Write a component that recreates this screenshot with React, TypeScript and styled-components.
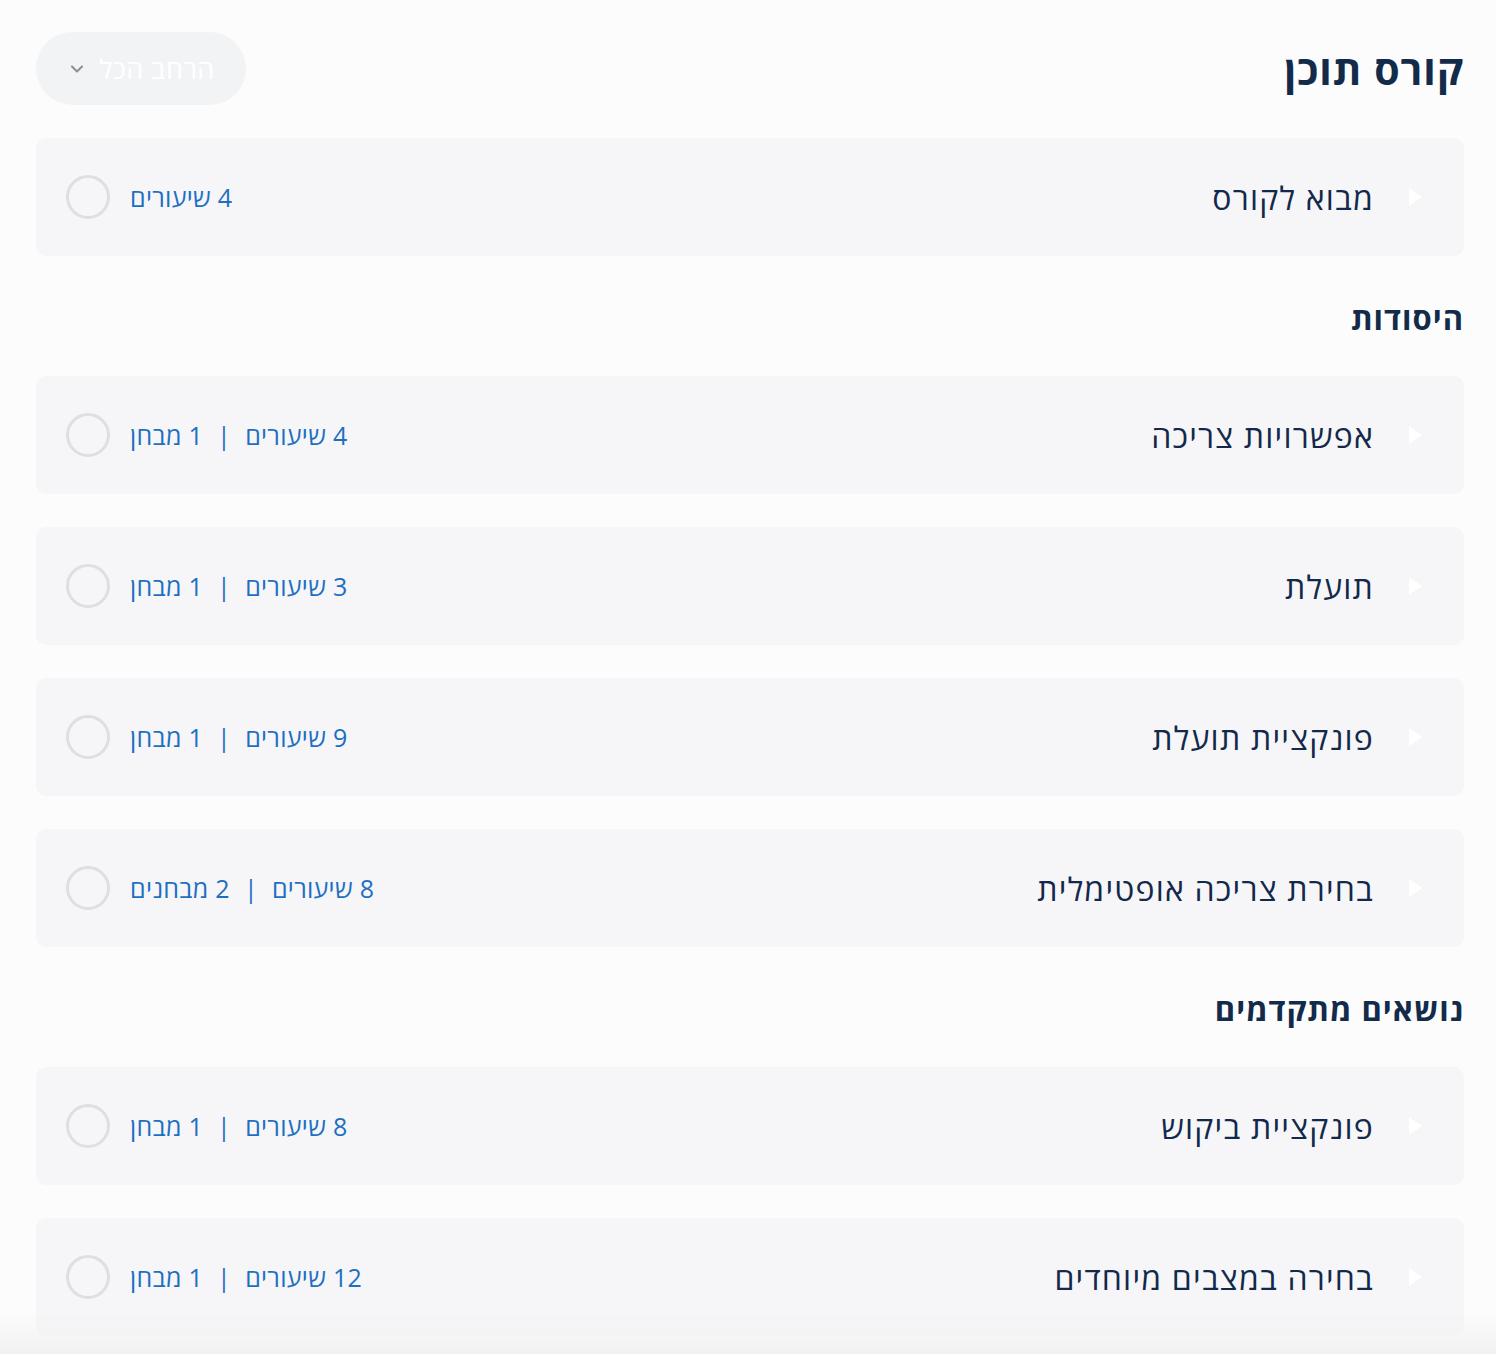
import React from "react";
import styled, { createGlobalStyle } from "styled-components";

const GlobalStyle = createGlobalStyle`
  html, body {
    margin: 0;
    padding: 0;
    background: #fcfcfc;
  }
  body {
    font-family: "Open Sans", "Noto Sans", "DejaVu Sans", sans-serif;
  }
`;

interface Module {
  title: string;
  lessons: number;
  exams?: number;
}

interface Section {
  heading?: string;
  modules: Module[];
}

const sections: Section[] = [
  { modules: [{ title: "מבוא לקורס", lessons: 4 }] },
  {
    heading: "היסודות",
    modules: [
      { title: "אפשרויות צריכה", lessons: 4, exams: 1 },
      { title: "תועלת", lessons: 3, exams: 1 },
      { title: "פונקציית תועלת", lessons: 9, exams: 1 },
      { title: "בחירת צריכה אופטימלית", lessons: 8, exams: 2 },
    ],
  },
  {
    heading: "נושאים מתקדמים",
    modules: [
      { title: "פונקציית ביקוש", lessons: 8, exams: 1 },
      { title: "בחירה במצבים מיוחדים", lessons: 12, exams: 1 },
    ],
  },
];

const Page = styled.div`
  direction: rtl;
  padding: 32px 32px 40px 36px;
  box-sizing: border-box;
  width: 1496px;
  min-height: 1354px;
`;

const Header = styled.div`
  display: flex;
  align-items: center;
  justify-content: space-between;
  height: 73px;
  margin-bottom: 33px;
`;

const PageTitle = styled.h1`
  margin: 0;
  font-size: 41px;
  line-height: 50px;
  font-weight: 700;
  color: #132b4a;
  letter-spacing: 1px;
`;

const ExpandButton = styled.button`
  display: flex;
  align-items: center;
  gap: 12px;
  height: 73px;
  width: 210px;
  justify-content: center;
  border: none;
  border-radius: 37px;
  background: #f2f3f5;
  color: #ffffff;
  font-family: inherit;
  font-size: 27px;
  letter-spacing: 0.5px;
  direction: rtl;
  cursor: pointer;
`;

const SectionHeading = styled.h2`
  margin: 41px 0 37px;
  font-size: 31px;
  line-height: 42px;
  font-weight: 700;
  letter-spacing: 1px;
  color: #132b4a;
`;

const List = styled.div`
  display: flex;
  flex-direction: column;
  gap: 33px;
`;

const Card = styled.div`
  display: flex;
  align-items: center;
  height: 118px;
  padding: 0 42px 0 30px;
  border-radius: 10px;
  background: #f6f6f8;
`;

const Arrow = styled.span`
  width: 0;
  height: 0;
  border-top: 9px solid transparent;
  border-bottom: 9px solid transparent;
  border-left: 13px solid #ffffff;
  margin-left: 35px;
`;

const CardTitle = styled.span`
  flex: 1;
  font-size: 32px;
  font-weight: 500;
  letter-spacing: 1.2px;
  color: #13294b;
`;

const Meta = styled.span`
  display: flex;
  align-items: center;
  gap: 14px;
  font-size: 25px;
  letter-spacing: 0.3px;
  color: #1d6fc2;
  margin-left: 20px;
`;

const Sep = styled.span`
  color: #1d6fc2;
`;

const Check = styled.span`
  width: 38px;
  height: 38px;
  border-radius: 50%;
  border: 3px solid #dfdfe1;
`;

const Fade = styled.div`
  position: fixed;
  left: 0;
  right: 0;
  bottom: 0;
  height: 40px;
  background: linear-gradient(to bottom, rgba(242, 242, 242, 0), #f1f1f1);
  pointer-events: none;
`;

const Chevron = () => (
  <svg width="20" height="20" viewBox="0 0 24 24" fill="none" stroke="#8d8f94" strokeWidth="2.5" strokeLinecap="round" strokeLinejoin="round">
    <path d="M6 9l6 6 6-6" />
  </svg>
);

const ModuleCard = ({ title, lessons, exams }: Module) => (
  <Card>
    <Arrow />
    <CardTitle>{title}</CardTitle>
    <Meta>
      <span>{lessons} שיעורים</span>
      {exams ? (
        <>
          <Sep>|</Sep>
          <span>
            {exams} {exams > 1 ? "מבחנים" : "מבחן"}
          </span>
        </>
      ) : null}
    </Meta>
    <Check />
  </Card>
);

export default function App() {
  return (
    <>
      <GlobalStyle />
      <Page>
        <Header>
          <PageTitle>קורס תוכן</PageTitle>
          <ExpandButton>
            <span>הרחב הכל</span>
            <Chevron />
          </ExpandButton>
        </Header>
        {sections.map((s, i) => (
          <div key={i}>
            {s.heading && <SectionHeading>{s.heading}</SectionHeading>}
            <List>
              {s.modules.map((m) => (
                <ModuleCard key={m.title} {...m} />
              ))}
            </List>
          </div>
        ))}
      </Page>
      <Fade />
    </>
  );
}
